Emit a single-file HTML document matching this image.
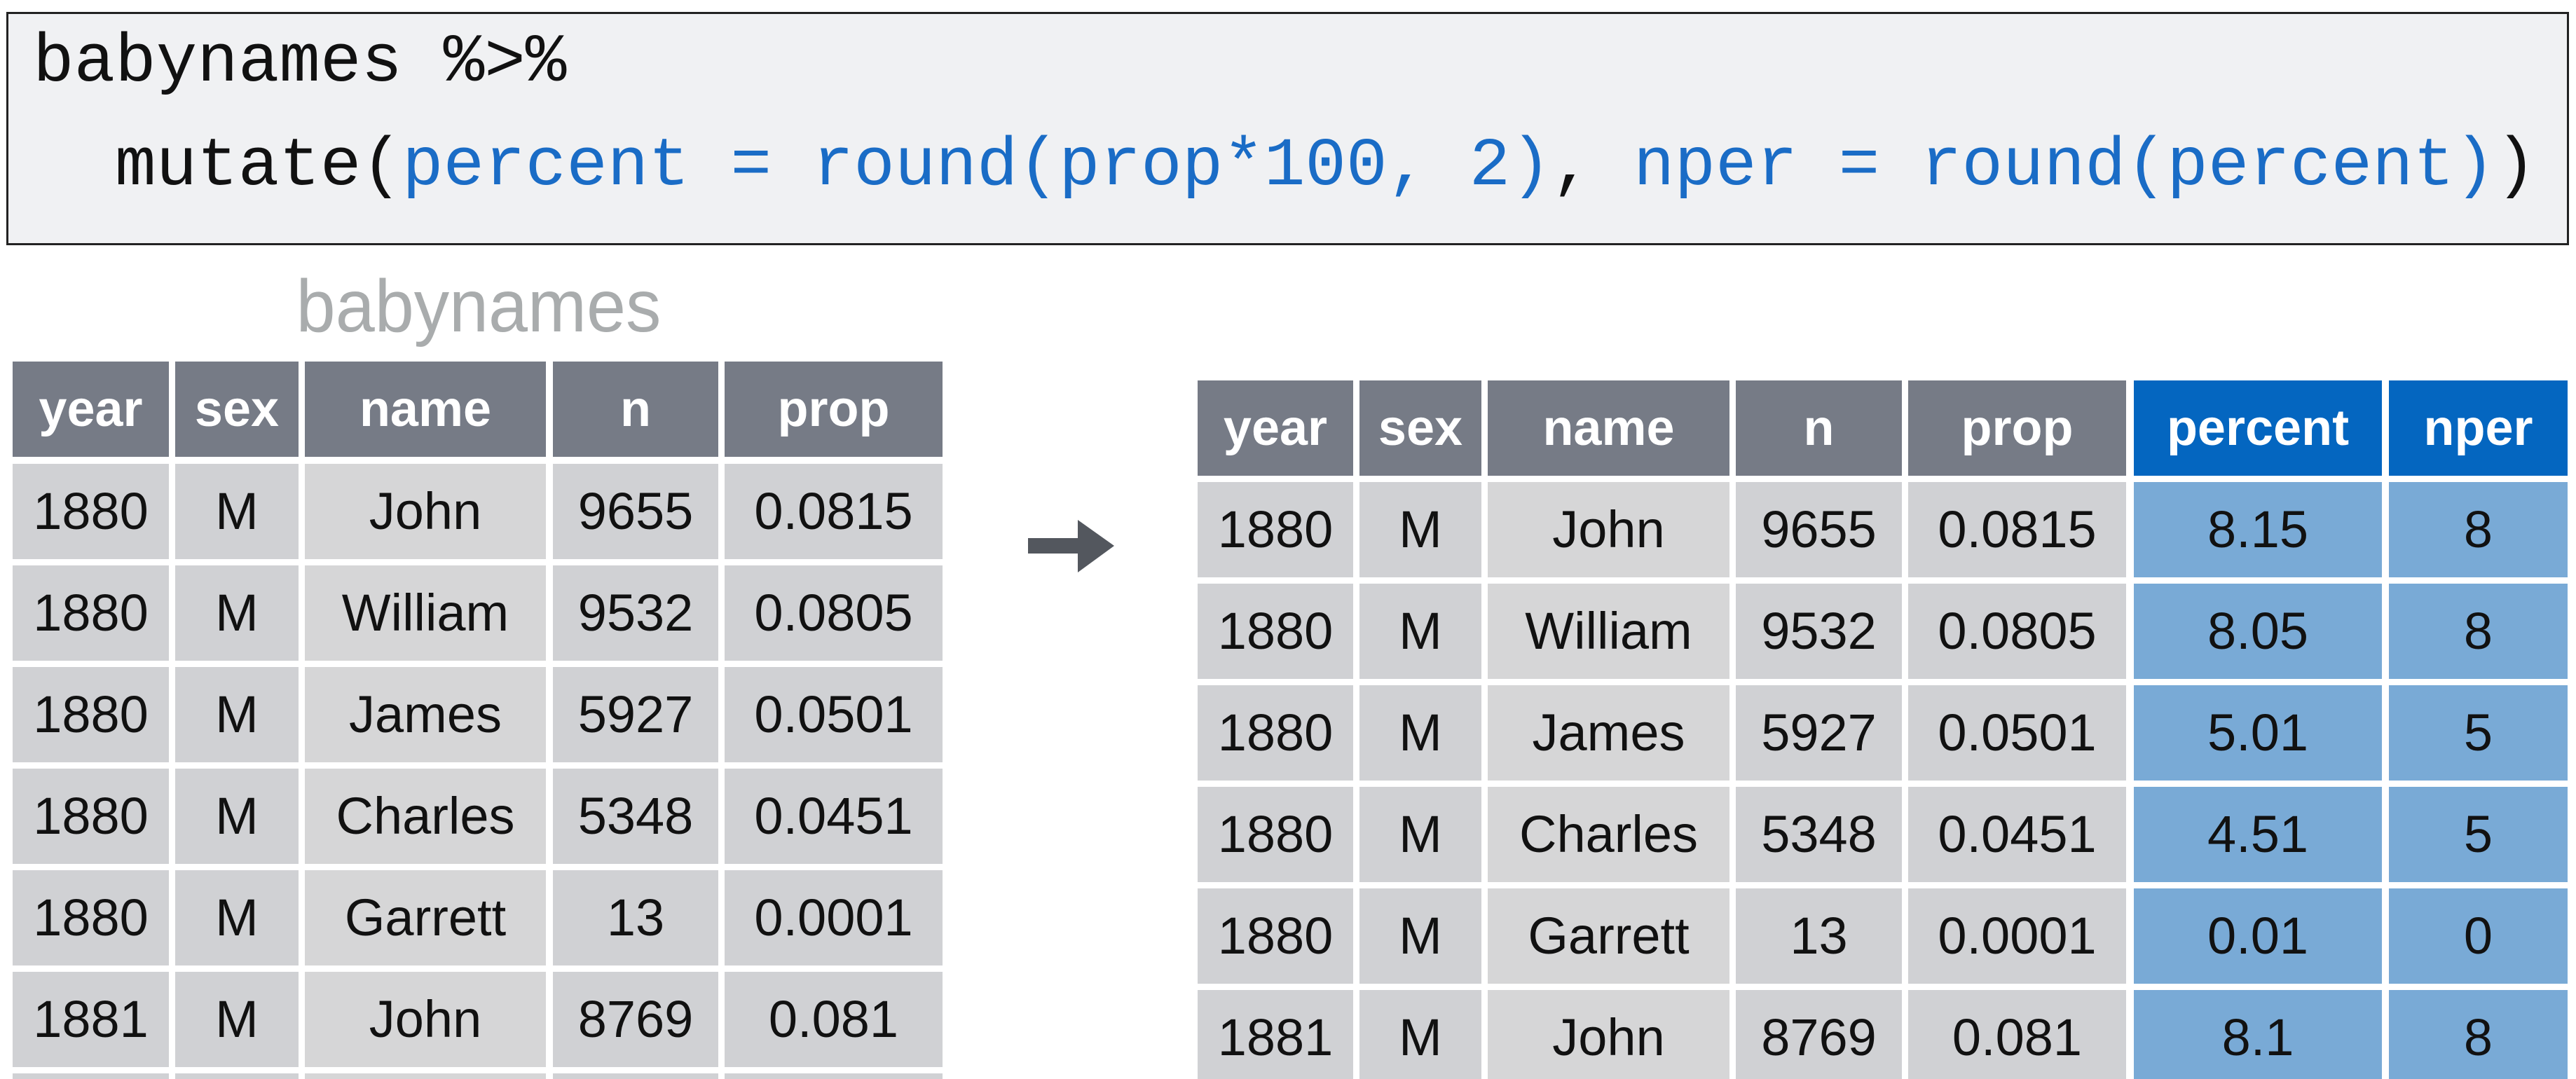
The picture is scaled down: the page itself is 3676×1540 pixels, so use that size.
<!DOCTYPE html>
<html style="overflow:hidden"><head><meta charset="utf-8"><style>
html,body{margin:0;padding:0}
#w{width:3676px;height:1540px;background:#fff;position:relative;overflow:hidden;font-family:"Liberation Sans",sans-serif}
.code{position:absolute;left:9px;top:17px;width:3651px;height:327px;background:#f0f1f3;border:3px solid #222;}
.ln{position:absolute;font-family:"Liberation Mono",monospace;font-size:97.6px;line-height:1;white-space:pre;color:#111}
.b{color:#1a6cc6}
.title{position:absolute;left:383px;top:384px;width:600px;text-align:center;font-size:106px;color:#a9acad;line-height:1;transform:scaleX(0.95)}
.c{position:absolute;height:136px;line-height:136px;text-align:center;font-size:74px;color:#111;background:#d0d1d4;overflow:hidden}
.c.nm{background:#d6d6d7}
.h{background:#767b86;color:#fff;font-weight:bold;font-size:72px}
.hb{background:#0466c0;color:#fff;font-weight:bold;font-size:72px}
.bl{background:#79aad6}
</style></head><body>
<div id="w">
<div class="code"></div>
<div class="ln" style="left:47px;top:42px">babynames %&gt;%</div>
<div class="ln" style="left:164px;top:190px">mutate(<span class="b">percent = round(prop*100, 2)</span>, <span class="b">nper = round(percent)</span>)</div>
<div class="title">babynames</div>
<svg style="position:absolute;left:0;top:0" width="3676" height="1540"><polygon points="1467,768 1538,768 1538,742 1590,779 1538,817 1538,790 1467,790" fill="#53575e"/></svg>
<div id="L"></div><div id="R"></div>
</div>
<script>
var rows=[["1880","M","John","9655","0.0815","8.15","8"],["1880","M","William","9532","0.0805","8.05","8"],["1880","M","James","5927","0.0501","5.01","5"],["1880","M","Charles","5348","0.0451","4.51","5"],["1880","M","Garrett","13","0.0001","0.01","0"],["1881","M","John","8769","0.081","8.1","8"],["","","","","","",""]];
var hd=["year","sex","name","n","prop","percent","nper"];
function tbl(cols,top0,rtop,n){var h="";
 for(var j=0;j<n;j++){var c=cols[j];h+='<div class="c '+(j>4?'hb':'h')+'" style="left:'+c[0]+'px;width:'+(c[1]-c[0])+'px;top:'+top0+'px">'+hd[j]+'</div>';}
 for(var i=0;i<rows.length;i++){var t=rtop+i*145;if(t>=1540)break;var hh=Math.min(136,1540-t);for(var j=0;j<n;j++){var c=cols[j];h+='<div class="c'+(j==2?' nm':'')+(j>4?' bl':'')+'" style="left:'+c[0]+'px;width:'+(c[1]-c[0])+'px;top:'+t+'px;height:'+hh+'px">'+rows[i][j]+'</div>';}}
 return h;}
document.getElementById("L").innerHTML=tbl([[18,241],[250,426],[435,779],[789,1025],[1034,1345]],516,662,5);
document.getElementById("R").innerHTML=tbl([[1709,1931],[1940,2114],[2123,2468],[2477,2714],[2723,3034],[3045,3399],[3409,3664]],543,688,7);
</script>
</body></html>
